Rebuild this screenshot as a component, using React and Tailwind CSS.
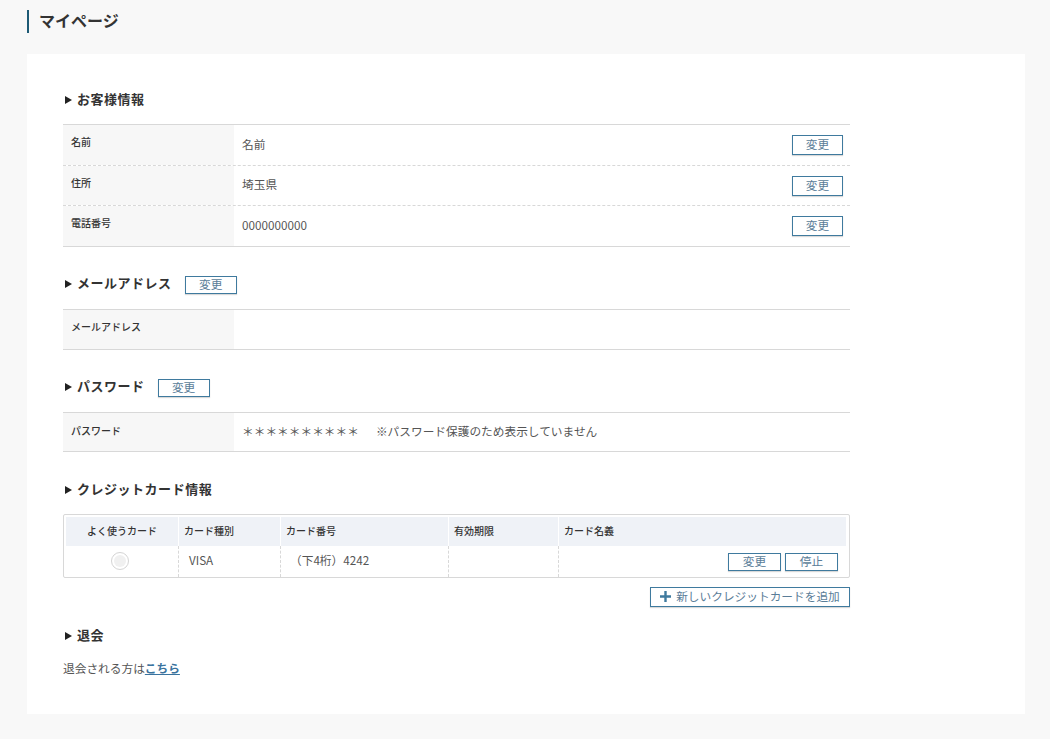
function Btn({ children, className = "" }) {
  return (
    <button className={"flex items-center justify-center border border-[#3f7a9e] bg-white pb-[2px] text-[11.7px] text-[#5a7d98] shadow-[0_1px_1px_rgba(0,0,0,0.15)] " + className}>
      {children}
    </button>
  );
}
function Title({ children, btn, btnClass = "" }) {
  return (
    <div className="flex h-[20px] items-center">
      <span className="ml-[2px] mr-[5px] mt-[1px] h-0 w-0 border-y-[4px] border-l-[7px] border-y-transparent border-l-[#222]"></span>
      <h2 className="text-[13px] font-bold leading-[20px] tracking-[0.04em] text-[#333]">{children}</h2>
      {btn && <Btn className={"mt-[4px] h-[18px] w-[52px] " + btnClass}>変更</Btn>}
    </div>
  );
}
function Row({ label, value, btn, dashed, h = "h-[40px]", labelTop = "pt-[10px]" }) {
  return (
    <div className={"flex " + h + " " + (dashed ? "border-b border-dashed border-[#d8d8d8]" : "")}>
      <div className={"w-[171px] shrink-0 bg-[#f7f7f7] pl-[8px] text-[10px] font-medium leading-[14px] text-[#333] " + labelTop}>{label}</div>
      <div className="flex flex-1 items-center justify-between pl-[8px] pr-[7px] text-[11.7px] text-[#555]">
        <span className="-mt-[3px]">{value}</span>
        {btn && <Btn className="h-[20px] w-[51px]">変更</Btn>}
      </div>
    </div>
  );
}
function Th({ children, w, center, last }) {
  return (
    <div className={"flex h-[29px] items-center bg-[#eff2f7] pb-[3px] text-[10px] font-medium text-[#333] " + w + " " + (center ? "justify-center" : "pl-[5px]") + " " + (last ? "" : "border-r border-white")}>
      {children}
    </div>
  );
}
function Td({ children, w, className = "", last }) {
  return (
    <div className={"flex h-[31px] items-center text-[11.7px] text-[#555] " + w + " " + (last ? "" : "border-r border-dashed border-[#d8d8d8] ") + className}>
      {children}
    </div>
  );
}
export default function App() {
  return (
    <div className="min-h-[739px] bg-[#f8f8f8] px-[27px] pt-[10px] pb-[25px] [font-family:'Noto_Sans_CJK_JP','Noto_Sans',sans-serif]">
      <h1 className="h-[23px] border-l-2 border-[#1d5a75] pl-[10px] text-[16px] font-bold leading-[20px] text-[#333]">マイページ</h1>
      <main className="mt-[21px] h-[660px] w-[998px] bg-white px-[36px] pt-[35px]">
        <Title>お客様情報</Title>
        <div className="mt-[15px] w-[787px] border-y border-[#d8d8d8]">
          <Row label="名前" value="名前" btn dashed h="h-[41px]" />
          <Row label="住所" value="埼玉県" btn dashed />
          <Row label="電話番号" value="0000000000" btn h="h-[40px]" />
        </div>
        <div className="mt-[26px]">
          <Title btn btnClass="ml-[13px]">メールアドレス</Title>
        </div>
        <div className="mt-[16px] w-[787px] border-y border-[#d8d8d8]">
          <Row label="メールアドレス" value="" h="h-[39px]" />
        </div>
        <div className="mt-[26px]">
          <Title btn btnClass="ml-[13px]">パスワード</Title>
        </div>
        <div className="mt-[16px] w-[787px] border-y border-[#d8d8d8]">
          <Row label="パスワード" h="h-[38px]" labelTop="pt-[11px]" value={<span><span>＊＊＊＊＊＊＊＊＊＊</span><span className="ml-[17px]">※パスワード保護のため表示していません</span></span>} />
        </div>
        <div className="mt-[27px]"><Title>クレジットカード情報</Title></div>
        <div className="mt-[15px] w-[787px] rounded-[2px] border border-[#d8d8d8] px-[2px] pt-[2px]">
          <div className="flex">
            <Th w="w-[113px]" center>よく使うカード</Th>
            <Th w="w-[102px]">カード種別</Th>
            <Th w="w-[168px]">カード番号</Th>
            <Th w="w-[110px]">有効期限</Th>
            <Th w="w-[287px]" last>カード名義</Th>
          </div>
          <div className="flex">
            <Td w="w-[113px]" className="justify-center pr-[4px] pb-[2px]">
              <span className="flex h-[18px] w-[18px] items-center justify-center rounded-full border border-[#d4d4d4] bg-white">
                <span className="h-[12px] w-[12px] rounded-full bg-[#f0f0f0]"></span>
              </span>
            </Td>
            <Td w="w-[102px]" className="pl-[10px] pb-[3px]">VISA</Td>
            <Td w="w-[168px]" className="pl-[9px] pb-[3px]">（下4桁）4242</Td>
            <Td w="w-[110px]"></Td>
            <Td w="w-[287px]" last className="justify-end gap-[4px] pr-[8px]">
              <Btn className="h-[18px] w-[53px]">変更</Btn>
              <Btn className="h-[18px] w-[53px]">停止</Btn>
            </Td>
          </div>
        </div>
        <div className="mt-[9px] flex w-[787px] justify-end">
          <Btn className="h-[20px] w-[200px] gap-[5px]">
            <svg width="11" height="11" viewBox="0 0 11 11"><path d="M4.3 0h2.4v4.3H11v2.4H6.7V11H4.3V6.7H0V4.3h4.3z" fill="#3f7a9e" /></svg>
            <span>新しいクレジットカードを追加</span>
          </Btn>
        </div>
        <div className="mt-[18px]"><Title>退会</Title></div>
        <p className="mt-[13px] text-[11.7px] leading-[20px] text-[#555]">
          退会される方は<a href="#" className="font-bold text-[#3a739e] underline">こちら</a>
        </p>
      </main>
    </div>
  );
}
